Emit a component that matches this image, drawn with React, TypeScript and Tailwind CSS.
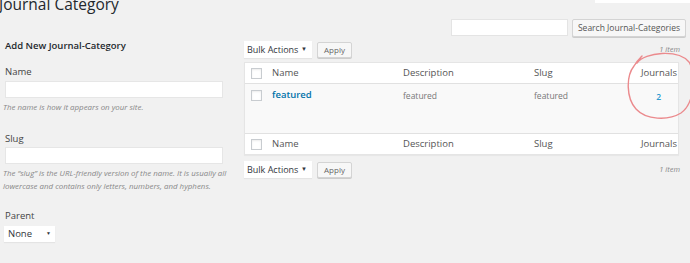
const Checkbox = () => (
    <span className="block w-[11px] h-[11px] bg-white border border-[#c8ccd0] shadow-[inset_0_1px_2px_rgba(0,0,0,0.08)]" />
)

const TableNav = ({ count }: { count?: boolean }) => (
    <div className="flex items-center h-[17px]">
        <div className="flex items-center justify-between w-[68px] h-[17px] bg-white pl-[3px] pr-[5px] text-[9px] text-[#32373c] shadow-[0_1px_1px_rgba(0,0,0,0.05)]">
            <span>Bulk Actions</span>
            <span className="text-[6px]">▼</span>
        </div>
        <button className="ml-[5px] w-[35px] h-[16px] border border-[#d4d4d4] bg-[#f7f7f7] rounded-[2px] text-[8px] text-[#666] shadow-[0_1px_0_#ccc]">
            Apply
        </button>
        {count && <span className="ml-auto mr-[6px] text-[7.5px] italic text-[#888]">1 item</span>}
    </div>
)

const App = () => {
    const columns = "grid grid-cols-[21px_131px_131px_1fr_42px]"

    return (
        <div className="relative w-[690px] h-[263px] overflow-hidden bg-[#f1f1f1] font-['Open_Sans',sans-serif] text-[#444]">

            {/* TOP */}
            <div className="flex items-start justify-between h-[19px]">
                <h1 className="ml-[-1px] mt-[-6px] text-[15.5px] leading-[20px] text-[#23282d]">Journal Category</h1>
                <div className="w-[95px] h-[3px] bg-white" />
            </div>

            {/* SEARCH */}
            <div className="flex justify-end gap-[4px] pr-[4px] h-[18px]">
                <div className="w-[117px] h-[17px] bg-white border border-[#e4e4e4]" />
                <button className="h-[18px] w-[114px] border border-[#d4d4d4] bg-[#f7f7f7] rounded-[2px] text-[8.5px] text-[#555] shadow-[0_1px_0_#ccc]">
                    Search Journal-Categories
                </button>
            </div>

            <div className="flex">
                {/* FORM */}
                <div className="w-[244px] pl-[5px]">
                    <h2 className="mt-[2px] text-[9.5px] leading-[14px] font-semibold text-[#23282d]">Add New Journal-Category</h2>

                    <div className="mt-[13px] text-[9.5px] leading-[12px]">Name</div>
                    <div className="mt-[3px] w-[218px] h-[17px] bg-white border border-[#e6e6e6]" />
                    <p className="mt-[3px] ml-[-2px] text-[7.9px] leading-[12px] italic text-[#888]">The name is how it appears on your site.</p>

                    <div className="mt-[20px] text-[9.5px] leading-[12px]">Slug</div>
                    <div className="mt-[2px] w-[218px] h-[17px] bg-white border border-[#e6e6e6]" />
                    <p className="mt-[3px] ml-[-2px] w-[236px] text-[7.9px] leading-[12.5px] italic text-[#888]">
                        The “slug” is the URL-friendly version of the name. It is usually all lowercase and contains only letters, numbers, and hyphens.
                    </p>

                    <div className="mt-[18px] text-[9.5px] leading-[12px]">Parent</div>
                    <div className="mt-[4px] ml-[-1px] flex items-center justify-between w-[51px] h-[16px] bg-white pl-[4px] pr-[4px] text-[9.5px] text-[#32373c] shadow-[0_1px_1px_rgba(0,0,0,0.05)]">
                        <span>None</span>
                        <span className="text-[5px]">▼</span>
                    </div>
                </div>

                {/* LIST */}
                <div className="flex-1 pt-[4px] pr-[4px]">
                    <TableNav count />

                    <div className="mt-[4px] w-[435px] border border-[#e5e5e5] bg-white shadow-[0_1px_1px_rgba(0,0,0,0.04)] text-[9.5px]">
                        <div className={`${columns} h-[21px] items-center border-b border-[#e1e1e1] text-[#555]`}>
                            <div className="pl-[6px]"><Checkbox /></div>
                            <div className="pl-[6px]">Name</div>
                            <div className="pl-[6px]">Description</div>
                            <div className="pl-[6px]">Slug</div>
                            <div className="text-right pr-[1px]">Journals</div>
                        </div>

                        <div className={`${columns} h-[49px] bg-[#f9f9f9] items-start`}>
                            <div className="pl-[6px] pt-[6px]"><Checkbox /></div>
                            <div className="pl-[6px] pt-[4px] leading-[14px] font-semibold text-[#0073aa]">featured</div>
                            <div className="pl-[6px] pt-[6px] leading-[12px] text-[8.5px] text-[#777]">featured</div>
                            <div className="pl-[6px] pt-[6px] leading-[12px] text-[8.5px] text-[#777]">featured</div>
                            <div className="pt-[7px] pr-[17px] text-right leading-[12px] text-[8.5px] font-semibold text-[#2e9bd0]">2</div>
                        </div>

                        <div className={`${columns} h-[21px] items-center border-t border-[#e1e1e1] text-[#555]`}>
                            <div className="pl-[6px]"><Checkbox /></div>
                            <div className="pl-[6px]">Name</div>
                            <div className="pl-[6px]">Description</div>
                            <div className="pl-[6px]">Slug</div>
                            <div className="text-right pr-[1px]">Journals</div>
                        </div>
                    </div>

                    <div className="mt-[6px]">
                        <TableNav count />
                    </div>
                </div>
            </div>

            {/* hand-drawn mark */}
            <svg className="absolute inset-0 pointer-events-none" width="690" height="263" viewBox="0 0 690 263" fill="none">
                <path
                    d="M637 63 C645 52 678 49 689 62 C697 75 694 104 681 113 C668 121 646 120 636 109 C626 98 626 76 634 66 C637 61 640 58 642 56 M641 57 L637 63"
                    stroke="#eb8a8d"
                    strokeWidth="1.4"
                    strokeLinecap="round"
                />
            </svg>
        </div>
    )
}

export default App
